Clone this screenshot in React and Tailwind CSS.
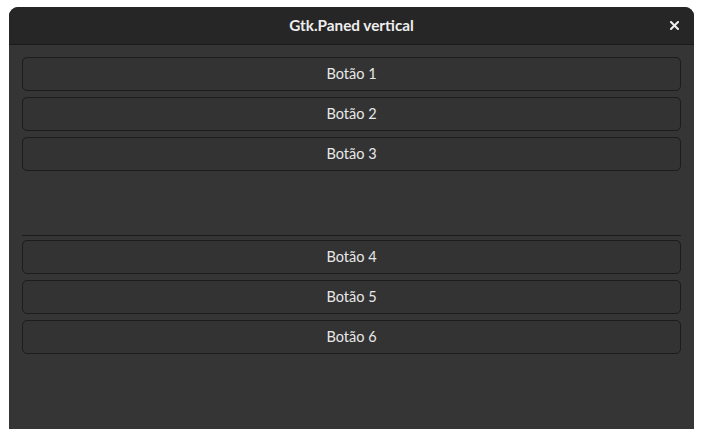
import React from 'react';

const font = { fontFamily: 'Lato, "Noto Sans", sans-serif' };

function PaneButton({ label }) {
  return (
    <button
      type="button"
      className="h-[34px] w-full rounded-[5px] border border-[#1c1c1c] bg-[#333333] pb-px text-[14.5px] text-[#e8e8e8] flex items-center justify-center"
    >
      {label}
    </button>
  );
}

export default function App() {
  return (
    <div className="w-[703px] h-[439px] bg-white overflow-hidden" style={font}>
      <div className="ml-[9px] mt-[7px] w-[685px] h-[422px] rounded-t-[9px] bg-[#353535] flex flex-col overflow-hidden">
        <div className="relative h-[38px] shrink-0 bg-[#262626] border-b border-[#1a1a1a] flex items-center justify-center">
          <span className="text-[15.3px] font-bold text-[#eeeeee]">Gtk.Paned vertical</span>
          <svg
            className="absolute right-[15px] top-[14px]"
            width="9"
            height="9"
            viewBox="0 0 9 9"
          >
            <path d="M1 1 L8 8 M8 1 L1 8" stroke="#eeeeee" strokeWidth="2" strokeLinecap="square" />
          </svg>
        </div>

        <div className="px-[13px] flex flex-col grow">
          <div className="h-[190px] pt-[12px] flex flex-col gap-[6px]">
            <PaneButton label="Botão 1" />
            <PaneButton label="Botão 2" />
            <PaneButton label="Botão 3" />
          </div>
          <div className="h-px bg-[#1c1c1c]" />
          <div className="pt-[4px] flex flex-col gap-[6px]">
            <PaneButton label="Botão 4" />
            <PaneButton label="Botão 5" />
            <PaneButton label="Botão 6" />
          </div>
        </div>
      </div>
    </div>
  );
}
